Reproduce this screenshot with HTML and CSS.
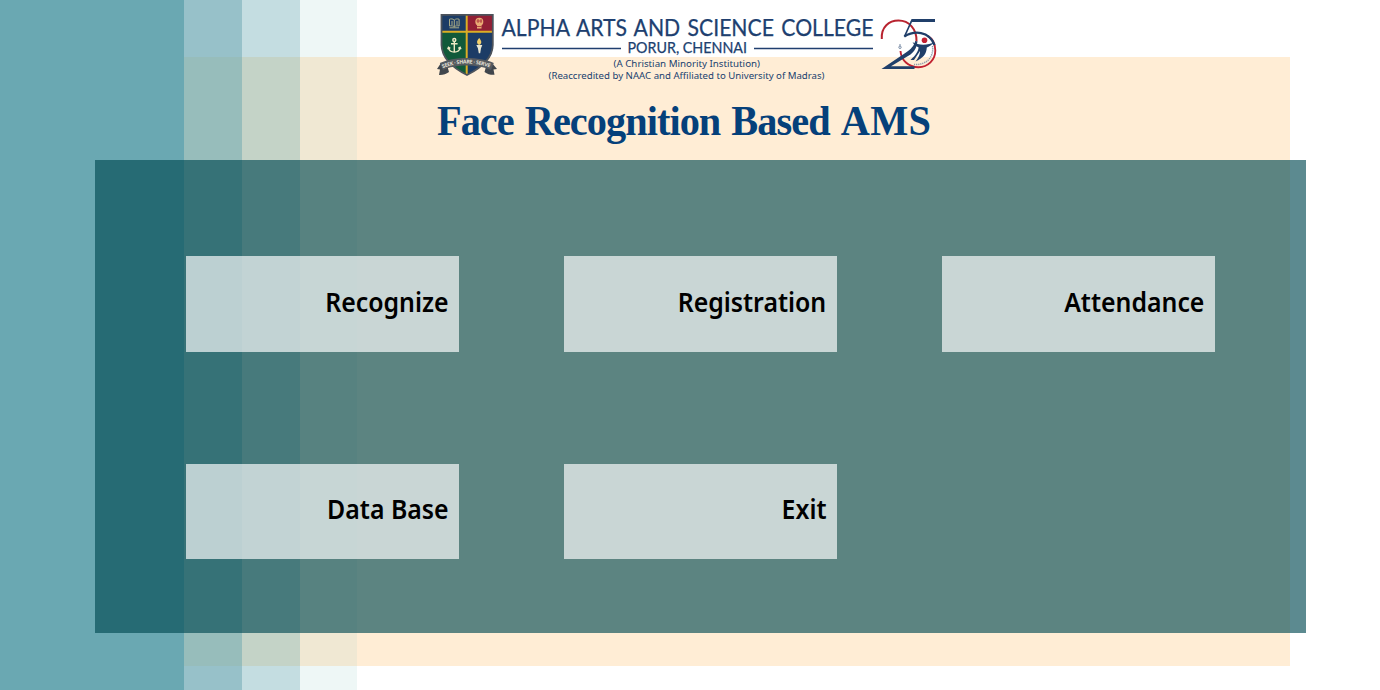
FILE: index.html
```html
<!DOCTYPE html>
<html lang="en">
<head>
<meta charset="utf-8">
<title>Face Recognition Based AMS</title>
<link rel="stylesheet" href="styles.css">
</head>
<body>
<div class="page">
  <div class="backdrop"></div>
  <header class="header">
    <svg class="banner" viewBox="430 5 515 80" width="515" height="80" role="img" aria-label="Alpha Arts and Science College">
      <!-- college crest -->
      <defs><clipPath id="shield"><path d="M441.500 15H493V45C493 60 479 69 467 75C455 69 441.500 60 441.500 45Z"/></clipPath></defs>
      <g clip-path="url(#shield)">
        <path fill="#1c3c66" d="M440 12h27v20h-27zM467 32h27v45h-27z"/>
        <path fill="#911f35" d="M467 12h27v20h-27z"/>
        <path fill="#115a3a" d="M440 32h27v45h-27z"/>
        <path stroke="#dcae24" stroke-width="2" d="M466.700 12v64M440 31.700h54"/>
      </g>
      <path fill="none" stroke="#4d535b" stroke-width="1.800" d="M441.500 14.900H492.800V45C492.500 60 479 69 467 75C455 69 442 60 441.500 45Z"/>
      <path fill="none" stroke="#a9ab86" stroke-width="1" d="M454.300 20c-1.500-1.300-3-1.300-4.800-.8v6.800c1.800-.4 3.500-.3 4.800.8c1.300-1.100 3-1.200 4.800-.8v-6.800c-1.800-.5-3.300-.5-4.800.8v6.800M449.500 27.800h9.600M451 22h2M451 24h2M456 22h2M456 24h2"/>
      <g fill="#e9ac75"><circle cx="479.300" cy="21.800" r="4"/><path d="M477 25h4.500v3.500H477z"/></g>
      <path fill="none" stroke="#a72a35" stroke-width=".8" d="M476.500 21h5.600M478 19v4M481 19v4M477 26.500h4.500"/>
      <g fill="none" stroke="#eee9c4" stroke-width="1.400"><circle cx="454.300" cy="40" r="1.500"/><path d="M454.300 41.500V52M451 43.800h6.600M448.500 47.500c.5 3 3 4.600 5.800 4.600s5.300-1.600 5.800-4.600M447.700 49.300l.8-2 1.800 1M461 49.300l-.9-2-1.800 1"/></g>
      <path fill="#f3cf69" d="M479.300 38c-3 3-2.800 5.500-.6 6.700h1.200c2.300-2 1.400-4-.6-6.700z"/>
      <path fill="#ece8d2" d="M476.300 45h6l-1.300 3.200-.8 5h-1.400l-.9-5z"/>
      <path fill="#41464c" d="M441 63l-4 6 3 .6-1 5.400c4 .2 7-.7 10-3l-2-7zM492 63l5 6-3.500.6 1 5.200c-4 .2-7-.6-10-2.800l2-7z"/>
      <path fill="#555a60" d="M439.800 63C453 56.500 479 56 493.800 63L491 70C478 64 455 64 443 70Z"/>
      <path id="motto" fill="none" d="M442.800 68.300Q467 58.500 491.500 68.300"/>
      <text class="motto"><textPath href="#motto" textLength="48">SEEK · SHARE · SERVE</textPath></text>

      <!-- college name -->
      <g class="ink">
        <text class="name" x="501.500" y="35.500" textLength="372" lengthAdjust="spacingAndGlyphs">ALPHA ARTS AND SCIENCE COLLEGE</text>
        <text class="place" x="627.500" y="53" textLength="119.500" lengthAdjust="spacingAndGlyphs">PORUR, CHENNAI</text>
        <text class="note" x="613.500" y="66.800" textLength="146.500" lengthAdjust="spacingAndGlyphs">(A Christian Minority Institution)</text>
        <text class="note" x="548.500" y="79.200" textLength="276" lengthAdjust="spacingAndGlyphs">(Reaccredited by NAAC and Affiliated to University of Madras)</text>
        <path d="M502 47.800h119v1.400H502zM754 47.800h119v1.400H754z"/>
      </g>

      <!-- 25 year emblem -->
      <g fill="none">
        <path stroke="#b8232f" stroke-width="2" d="M881.800 39C881 27 889 20.600 898.500 20.600C909 20.600 917 29 916.500 41.500"/>
        <path stroke="#c12231" stroke-width="1.900" d="M900.500 51C901 60 908.500 67.200 918.500 67.200C928 67.200 935.300 60 935.300 50.500C935.300 43.500 932.500 38.500 927.500 35.800"/>
        <path stroke="#8d9bad" stroke-width="1.500" stroke-dasharray="1.300 .8" d="M932.500 46C934 57 927 65 914 64.600"/>
        <path stroke="#203f6a" stroke-width="1.700" d="M911.800 20.500L904.500 36.500"/>
        <path stroke="#203f6a" stroke-width="2.300" d="M904.300 36.500C914 30.500 929 30.500 934.500 45"/>
      </g>
      <g fill="#203f6a">
        <path d="M911.500 19H935v2.900H910.500zM881.500 69L906 52.500C911 49 914 46 915.200 41L917.500 41.500C916.500 48 914.500 51.500 910.500 54.500L891 66.300H914.500V69Z"/>
        <path d="M912.500 42.300C919 45.500 928 45.500 934.500 42C932 45 929 46.800 926.800 47.400C926.500 54 923 58 915.500 61.500C919 57 920 54 920 51L914 60H910.500C916 55 918.500 51 918.500 47.300C916 46.500 914 44.900 912.500 42.300Z"/>
      </g>
      <circle fill="#c22032" cx="924.500" cy="40.300" r="2.800"/>
      <circle fill="none" stroke="#788ba5" stroke-width="1" cx="900" cy="47.300" r="1.200"/>
      <path stroke="#788ba5" stroke-width="1" d="M900 44v2"/>
    </svg>
    <h1 class="title">Face Recognition Based <span class="acronym">AMS</span></h1>
  </header>
  <main class="panel">
    <button class="card"><span class="label">Recognize</span></button>
    <button class="card"><span class="label">Registration</span></button>
    <button class="card"><span class="label">Attendance</span></button>
    <button class="card"><span class="label">Data Base</span></button>
    <button class="card"><span class="label">Exit</span></button>
  </main>
</div>
</body>
</html>
```

FILE: styles.css
```css
* { box-sizing: border-box; }
body { margin: 0; background: #fff; }

.page {
  position: relative;
  width: 1380px;
  height: 690px;
  overflow: hidden;
  background: linear-gradient(90deg, #6aa8b2 184px, #97c1c9 184px 241.700px, #c4dde1 241.700px 299.700px, #eef7f6 299.700px 357.300px, #fff 357.300px);
}

/* cream sheet with the stripes showing through */
.backdrop {
  position: absolute;
  left: 184px;
  top: 57px;
  width: 1106px;
  height: 609px;
  background: linear-gradient(90deg, #97bdbb 57.700px, #c4d3c7 57.700px 115.700px, #f0e8d3 115.700px 173.300px, #ffedd5 173.300px);
}

.header {
  position: relative;
  height: 159.700px;
  padding: 5px 0 0 430px;
}
.banner { display: block; }
.ink { fill: #203f6f; }
.name { font: 400 22.300px Lato, sans-serif; word-spacing: 2px; stroke: #203f6f; stroke-width: .25px; }
.place { font: 400 15px Lato, sans-serif; stroke: #203f6f; stroke-width: .25px; }
.note { font: 400 9.800px "Noto Sans", sans-serif; }
.motto { font: 700 5.200px "Noto Sans", sans-serif; fill: #e5e1d8; }

.title {
  width: 493px;
  margin: 12px 0 0 6.500px;
  color: #05407a;
  font: 700 42px/48px "Liberation Serif", serif;
  letter-spacing: -1px;
  word-spacing: 2px;
  white-space: nowrap;
  transform: scaleX(.96);
  transform-origin: left center;
}
.acronym { letter-spacing: .4px; }

.panel {
  position: relative;
  display: grid;
  grid-template-columns: repeat(3, 273px);
  grid-template-rows: 96px 95px;
  gap: 112px 105px;
  width: 1211px;
  height: 473px;
  margin-left: 95px;
  padding: 96px 0 0 91px;
  background: rgba(0, 72, 81, .64);
}

.card {
  display: flex;
  align-items: center;
  justify-content: flex-end;
  margin: 0;
  padding: 0 10.500px 4px 0;
  border: 0;
  background: rgba(255, 255, 255, .67);
  color: #000;
}
.label {
  font: 600 26.300px/36px "Noto Sans", sans-serif;
  white-space: nowrap;
  transform: scaleX(.945);
  transform-origin: right center;
}
```
